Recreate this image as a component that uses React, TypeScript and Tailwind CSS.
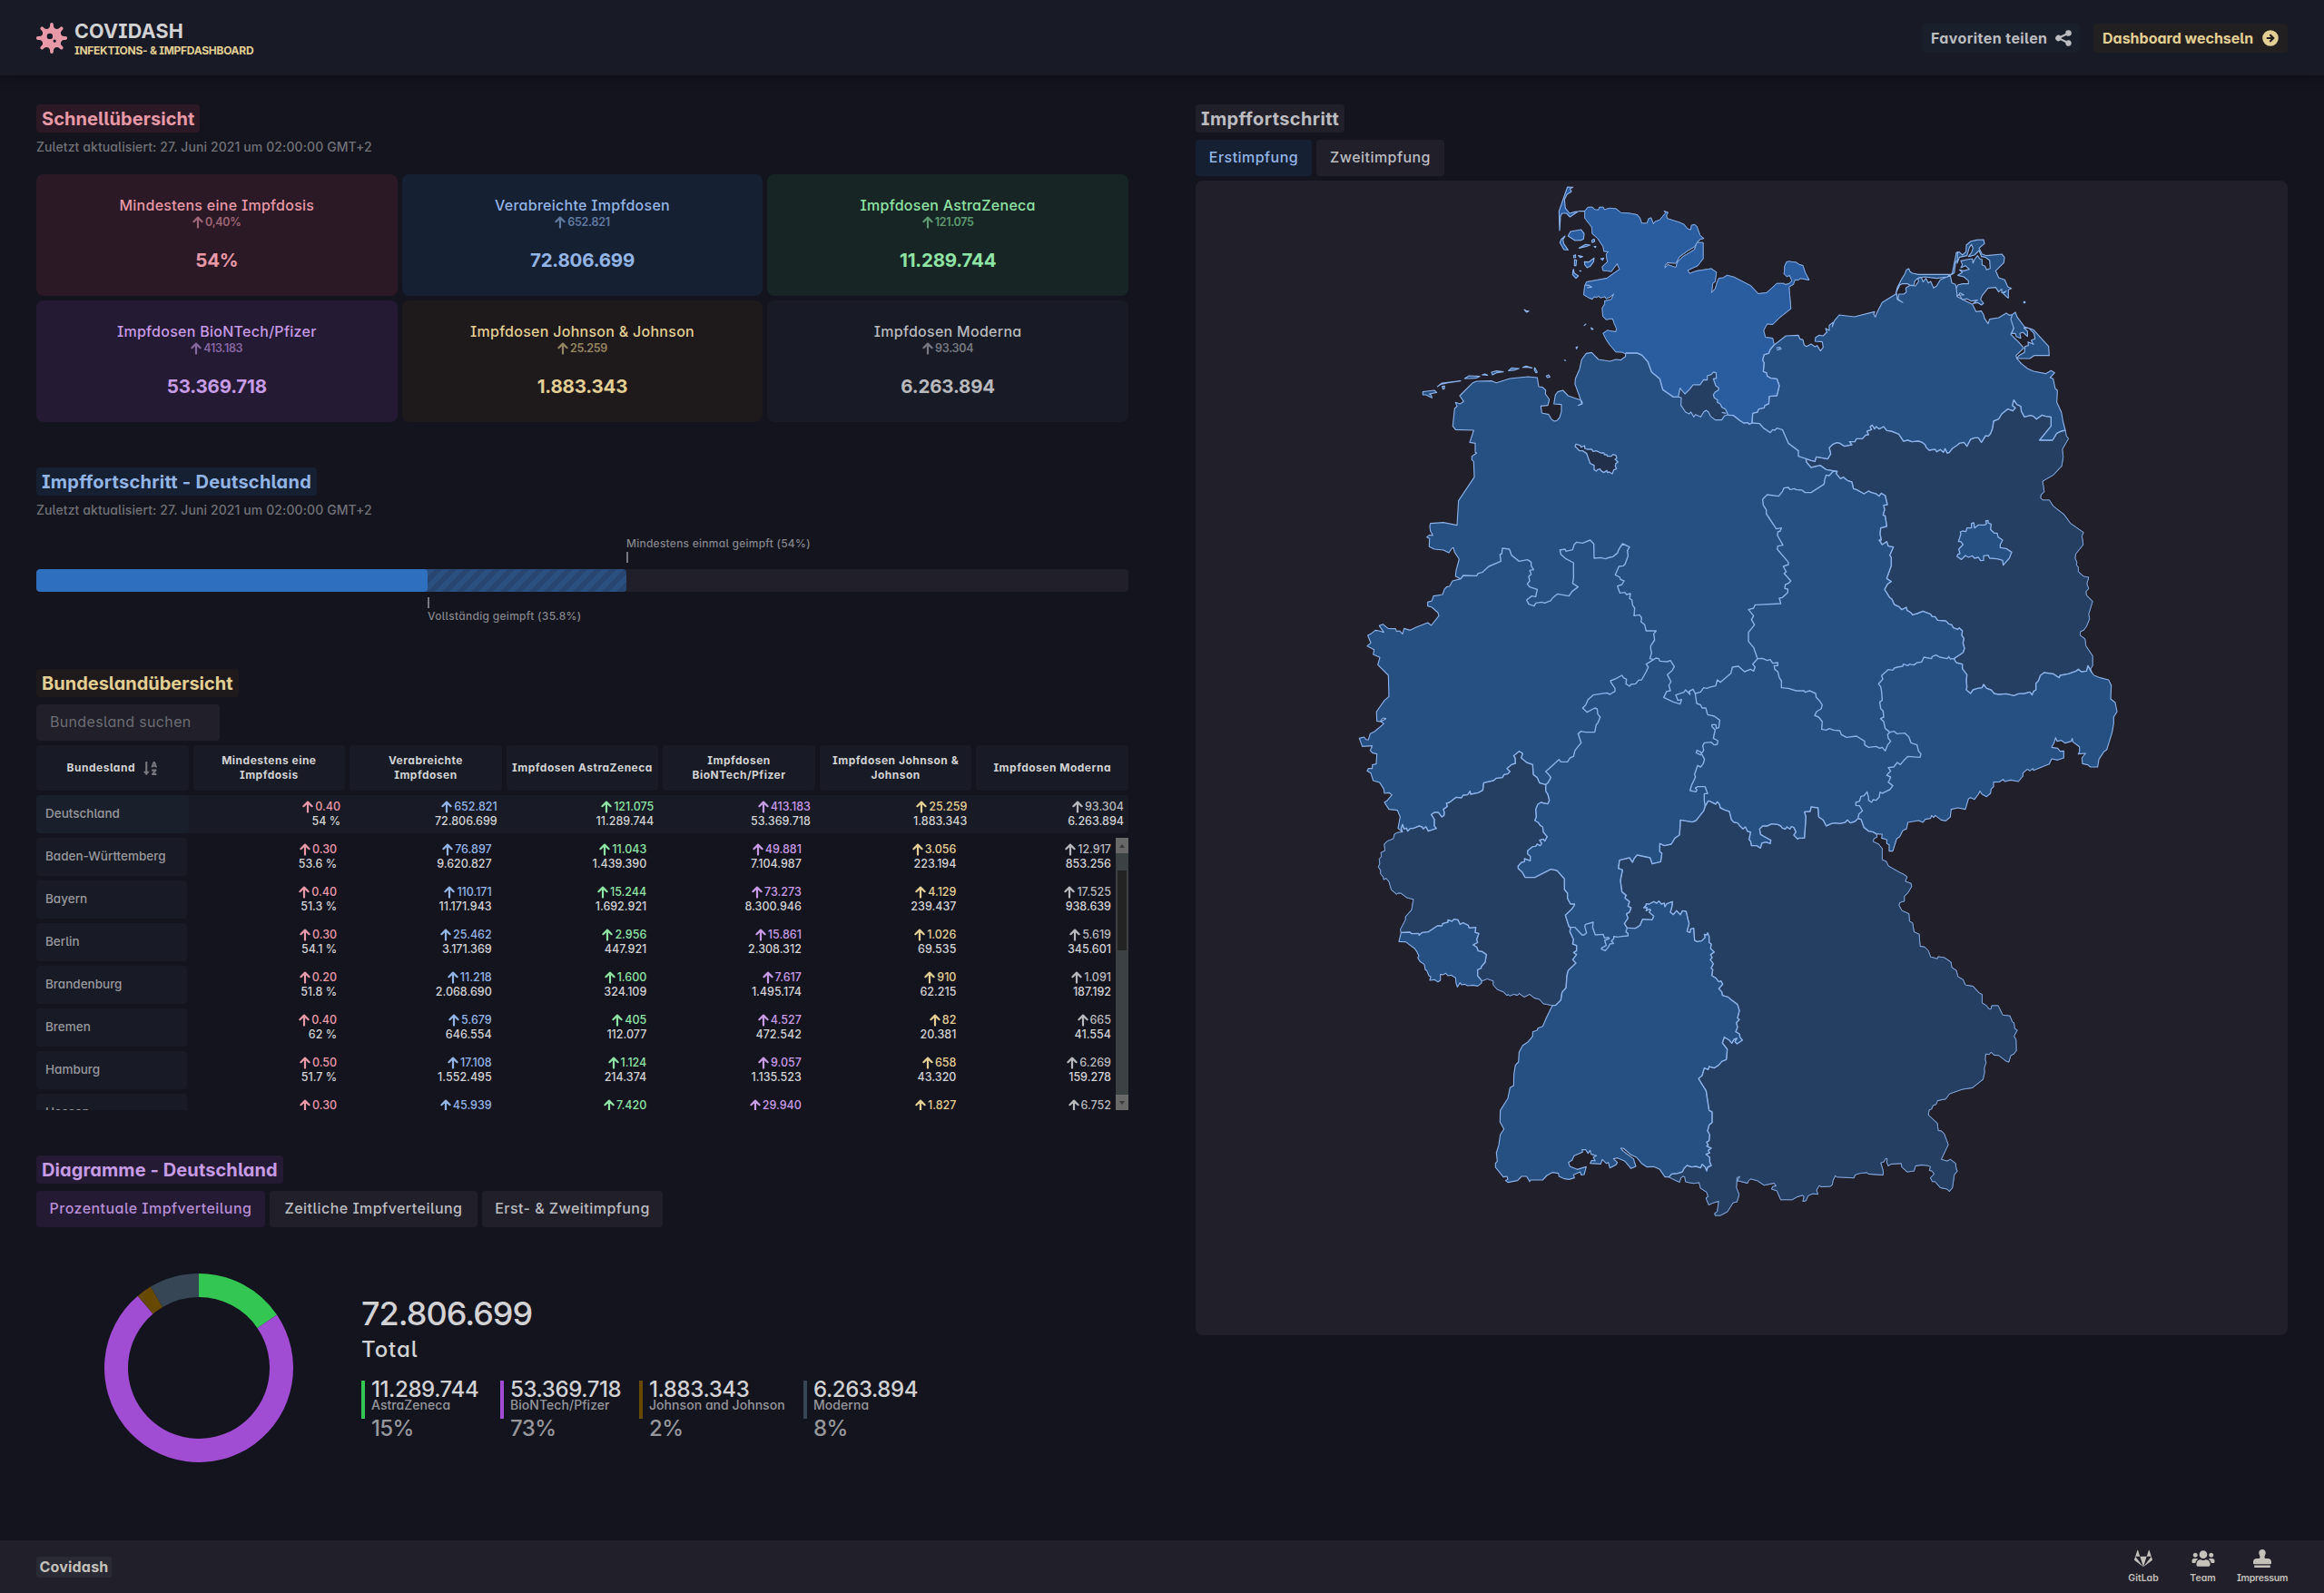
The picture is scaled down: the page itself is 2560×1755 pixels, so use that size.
import React from "react";
import { FaGitlab, FaStamp, FaUsers, FaSortAlphaDown, FaVirus } from "react-icons/fa";
import { HiArrowCircleRight, HiShare } from "react-icons/hi";

/* ---------- map geometry ---------- */

// Offsets of the six survey sheets the coordinates are recorded on.
const SHEETS: Record<string, [number, number]> = {
  A: [0, 0],
  B: [1260, 0],
  C: [0, 1200],
  D: [1260, 1200],
  E: [0, 2340],
  F: [1260, 2340],
};

type Pt = [number, number];

function arc(src: string): Pt[] {
  let off: [number, number] = [0, 0];
  const out: Pt[] = [];
  for (const tok of src.trim().split(/\s+/)) {
    if (SHEETS[tok]) {
      off = SHEETS[tok];
      continue;
    }
    const [x, y] = tok.split(",").map(Number);
    out.push([x + off[0], y + off[1]]);
  }
  return out;
}

const rev = (a: Pt[]): Pt[] => [...a].reverse();
const line = (a: Pt[]) => "M" + a.map((p) => p.join(",")).join("L");
const ring = (...arcs: Pt[][]) => line(arcs.flat()) + "Z";

const shCoast = arc(`A 932,630 922,624 900,623 880,600 868,582 858,562 872,552 900,557 902,545 895,530 889,513 868,516 857,505 855,478 863,465 863,455 885,450 893,431 880,442 868,447 864,440 850,444 842,439 835,443 828,440 822,448 812,445 806,441 794,434 797,405 803,392 870,380 912,350 904,331 885,357 857,354 855,342 872,326 868,300 875,292 860,290 858,275 840,248 822,232 820,210 803,188 797,180 797,158 808,145 822,145 830,153 842,154 846,145 858,145 862,153 880,148 900,150 916,163 945,165 970,170 980,182 985,198 1003,198 1008,183 1016,180 1024,200 1030,192 1045,187 1066,162 1060,158 1072,162 1067,172 1069,182 1110,195 1125,202 1135,215 1147,220 1150,205 1160,202 1168,210 1178,238 1190,248 1180,250 1170,258 1160,275 1135,290 1110,308 1098,330 1070,328 1062,338 1062,346 1072,335 1098,344 1104,325 1122,308 1160,285 1168,262 1188,262 1188,315 1170,338 1137,353 1143,364 1165,356 1215,348 1232,360 1228,390 1220,396 1216,428 1228,415 1234,395 1240,380 1255,378 1268,370 1290,376 1345,404 1370,431 1398,428 1432,397 1456,397 B 198,401 212,398 222,388 214,370 205,374 196,365 198,340 204,326 212,324 235,327 247,335 258,338 265,360 278,385 250,380 240,386 232,384 226,400 212,408 218,480 180,510 158,532 140,530 128,552 134,575 158,578 163,600`);
const shMv = arc(`B 163,600 150,615 145,628 130,632 125,650 130,660 127,688 138,692 140,703 152,710 172,712 180,735 172,768 147,770 145,795 132,800 130,808 112,812 108,822 92,826 90,858`);
const shNiEast = arc(`B 90,858 80,862 76,857 62,858 50,850 28,833 10,832`);
const hhNorth = arc(`A 1270,830 1262,812 1250,806 1245,795 1235,790 1236,782 1225,775 1222,765 1228,755 1238,750 1240,742 1230,735 1222,712 1232,710 1231,692 1222,690 1215,698 1202,702 1202,716 1190,715 1178,732 1155,732 1145,745 1128,762 1118,750 1112,743 1106,772`);
const shNiWest = arc(`A 1106,772 1090,772 1055,748 1045,712 1018,690 1005,655 985,633 970,627 932,627`);
const hhSouth = arc(`A 1106,772 1116,774 1115,800 1130,822 1142,828 1148,822 1157,838 1163,830 1180,838 1190,822 1198,816 1206,822 1212,835 1228,848 1250,848 1258,835 1270,830`);

const mvCoast = arc(`B 163,600 202,570 243,568 248,580 258,583 262,600 270,605 285,597 298,606 305,602 316,620 325,608 322,590 298,588 300,575 312,568 325,570 337,558 333,545 345,552 345,535 358,525 355,540 362,520 378,501 428,507 495,490 492,498 497,508 503,493 520,460 560,435 568,430 570,450 588,460 572,448 575,432 592,432 600,425 598,412 612,403 630,405 640,390 638,378 650,378 655,392 665,380 672,395 680,390 690,412 700,405 712,385 745,370 750,395 762,400 768,420 768,440 790,452 818,466 830,490 848,488 855,500 858,512 870,530 875,515 905,510 930,495 940,502 950,500 955,545 945,565 970,590 988,610 962,635 965,645 980,662 1000,678 1020,687 1060,695 1078,685 1090,692 1075,708 1085,712 1092,745 1099,750 1097,790 1112,822 1118,855 1125,882`);
const bbEast = arc(`B 1125,882 1128,900 1135,910 1115,945 1118,970 1113,1000 1085,1030 1050,1050 1055,1085 1045,1095 1043,1106 1050,1113 1072,1113 1085,1133 1120,1160 1142,1190 1185,1220 D 1180,30 1184,60 1160,90 1157,105 1163,118 1162,128 1168,135 1168,150 1185,165 1202,168 1196,190 1202,205 1193,215 1195,228 1215,248 1202,290 1205,305 1195,330 1185,343 1175,347 1174,360 1190,372 1193,395 1215,428 1215,460 1208,472 1212,482`);
const snCoast = arc(`D 1212,482 1220,492 1240,500 1268,507 1277,525 1275,570 1290,582 1296,612 1285,630 1285,650 1280,680 1270,712 1262,738 1252,745 1236,770 1232,795 1208,795 1200,788 1182,784 1180,765 1192,750 1168,752 1172,745 1172,728 1150,712 1148,700 1145,710 1125,716 1112,707 1098,710 1093,698 1088,715 1080,730 1100,733 1108,743 1120,742 1120,765 1100,772 1080,768 1072,785 1040,798 1020,806 1018,800 1008,808 1000,802 985,815 985,825 970,843 945,838 925,843 920,836 908,844 888,845 888,860 880,868 878,882 865,893 850,885 843,875 838,885 825,902 812,896 805,900 795,935 770,930 748,935 745,960 730,973 715,970 695,955 690,962 683,955 680,965 662,968 655,978 640,972 605,978 600,1000 588,1005 578,1025 568,1032 555,1073 543,1073 543,1052 535,1048 535,1035 518,1030 520,1017 500,1016`);
const byEast = arc(`D 500,1016 503,1026 492,1032 490,1042 508,1050 520,1065 520,1102 533,1107 540,1122 580,1145 F 588,8 602,18 596,33 615,40 617,50 605,70 593,82 593,98 578,103 575,112 585,130 608,140 610,165 620,170 625,200 642,208 645,248 660,250 672,262 680,283 703,289 705,282 725,285 747,300 750,318 765,328 770,348 787,358 795,376 820,380 840,402 850,407 850,435 863,443 873,455 880,455 882,444 903,444 918,475 942,478 950,498 955,500 958,520 966,525 955,545 962,555 963,592 955,603 945,608 938,630 930,627 905,608 890,607 880,597 873,605 862,603 860,620 863,632 857,650 858,665 853,687 818,715 785,720 742,735 730,752 703,757 698,770 688,773 683,785 675,788 672,805 702,833 705,857 715,858 725,868 738,903 715,952 735,958 745,952 762,965 765,985 768,990 758,1003 752,1045 742,1057 735,1050 712,1045 695,1025 686,1025 680,1013 692,1000 685,990 676,988 680,976 670,972 650,970 630,973 625,990 603,993 585,977 583,965 550,967 540,973 535,960 537,950 532,948 525,960 515,963 523,990 523,1003 475,1000 470,995 445,998 430,1003 427,1013 370,1010 365,1005 357,1022 355,1035 348,1041 318,1042 312,1038 303,1053 307,1067 290,1065 275,1072 268,1088 258,1090 262,1075 258,1070 240,1075 222,1085 185,1085 172,1055 155,1050 158,1042 170,1040 163,1030 130,1037 108,1022 85,1016 78,1022 75,1030 42,1022 50,1008 40,1012 38,1045 47,1068 40,1092 27,1095 8,1125 E 1245,1137 1228,1137 1227,1130 1235,1125 1240,1090 1222,1095 1207,1102 1198,1080 1205,1075 1200,1060 1180,1047 1175,1028 1158,1031 1140,1028 1130,1025 1128,1010 1122,1007 1115,1012 1110,1027 1095,1020 1075,1010`);
const bwSouth = arc(`E 1075,1010 1062,1010 1045,985 1025,976 1003,977 985,965 968,945 950,937 925,915 916,915 925,925 958,950 966,975 950,982 930,958 905,947 892,950 905,962 900,970 880,980 875,962 868,965 855,952 850,967 815,965 820,955 832,957 825,945 836,940 818,935 815,922 808,932 800,920 788,920 790,928 762,940 755,955 743,962 748,975 772,985 802,976 795,1002 785,1003 782,993 760,1003 763,1013 745,1018 730,1016 712,1008 710,998 690,995 672,1005 658,1020 618,1020 615,1025 605,1008 588,1008 575,1022 543,1028 535,1022 543,1018 540,1008 528,1010 502,978 502,965 508,958 505,930 513,905 518,870 530,852 517,828 518,790 543,750 550,715 562,708 563,670 568,640 578,630 580,598 592,575 608,565 625,545 625,530 640,525 642,518 658,512 672,480 690,443`);
const rpSouth = arc(`E 690,443 660,437 648,423 630,418 615,406 597,415 580,403 575,409 563,406 550,411 543,406 540,410 530,399 508,390 495,375 495,362 475,355 457,362`);
const slSouth = arc(`E 457,362 455,370 443,379 428,376 410,378 400,373 390,375 385,368 376,382 372,370 370,352 355,343 345,345 338,337 328,342 320,340 320,360 312,365 300,358 285,360 288,348 282,345 275,328 270,325 267,308 252,297 245,285 249,280 242,265 235,255 205,233 183,232 190,202`);
const rpWest = arc(`E 190,202 188,192 205,160 205,150 225,128 231,92 210,87 190,72 182,71 175,75 158,60 150,33 140,22 133,27 131,18 123,8 C 122,1135 115,1125 120,1115 118,1100 125,1092 124,1078 137,1072 135,1050 145,1040 165,1032 168,1018 178,1012 195,1010`);
const nwWest = arc(`C 195,1010 180,998 187,960 178,938 150,935 135,912 145,905 160,887 150,880 135,882 133,868 120,847 98,840 90,815 78,808 82,800 95,800 95,788 108,785 110,752 95,748 88,740 95,725 62,727 52,700 68,696 75,705 82,705 88,685 102,678 133,652 123,645 140,635 130,633 120,645 110,643 109,612 135,575 150,562 148,492 113,457 120,433 98,423 101,407 78,395 90,385 80,360 90,355 105,343 118,345 133,350 118,328 130,323 147,337 172,338 175,347 185,345 195,355 200,337 220,343 240,333 278,318 290,327 315,295 312,285 292,267 278,263 278,250 292,246 297,230 327,225 333,208 340,200 350,198 360,180 388,173`);
const niWest = arc(`C 388,173 370,165 372,145 382,108 367,85 363,70 358,72 348,87 330,78 300,75 283,67 284,40 275,35 284,28 295,30 287,15 285,0 A 287,1190 330,1187 375,1196 380,1115 432,1037 430,985 424,980 424,968 440,957 435,955 435,925 417,922 430,882 370,880 361,868 367,810 375,803 370,790 385,795 397,787 384,768 427,725 440,720 490,719 505,725 550,711 610,705 640,708 645,738 658,740 668,750 667,762 680,780 675,800 652,802 655,825 678,830 688,847 697,852 705,850 714,840 720,820 720,797 695,795 700,765 708,755 725,750 742,768 785,783 790,792 775,800 788,796 778,765 765,730 766,712 780,680 787,648 802,628 820,625 842,648 880,654 900,648 915,650 932,638 932,627`);

const niMv = arc(`B 90,858 115,860 128,875 150,890 158,880 165,882 172,875 190,880 210,925 243,950 243,968 268,976`);
const mvBb = arc(`B 268,976 285,982 298,985 302,970 340,977 350,960 345,940 358,928 370,923 380,925 395,935 420,930 412,920 430,920 435,910 455,910 465,898 475,897 470,885 485,880 480,870 487,865 495,878 500,870 510,878 525,870 535,883 550,885 575,895 590,918 605,915 618,920 640,918 652,922 662,930 665,938 675,948 695,945 700,953 712,946 722,955 728,943 735,958 742,955 752,942 770,930 775,925 790,922 800,935 812,912 825,907 838,907 848,922 862,900 870,902 878,893 885,875 888,852 905,845 915,828 935,812 952,818 960,808 950,800 955,782 965,797 978,803 980,820 990,838 1010,833 1020,836 1030,845 1048,832 1060,836 1078,838 1078,868 1040,915 1083,915 1097,892 1112,885 1125,882`);
const niBb = arc(`B 268,976 270,988 285,1005 315,998 335,1012 372,1018`);
const niSt = arc(`B 372,1018 358,1018 345,1032 335,1030 330,1045 328,1060 285,1088 265,1088 255,1080 235,1078 230,1075 215,1078 210,1071 195,1073 190,1085 178,1100 140,1095 125,1110 127,1130 137,1145 137,1158 170,1208 187,1205 183,1215 175,1218 174,1230 D 192,62 175,65 173,75 210,118 210,126 193,132 203,150 196,155 218,180 210,188 200,192 198,205 208,207 208,218 190,235 180,237 185,255 100,259 95,270 78,275 95,295 88,308 98,325 78,350 78,380 95,400 108,437`);
const bbSt = arc(`B 372,1018 368,1025 382,1042 392,1037 405,1048 420,1053 425,1075 435,1078 460,1092 475,1083 485,1088 500,1092 510,1100 517,1090 530,1098 537,1128 525,1130 528,1145 523,1162 530,1165 535,1200 515,1205 513,1225 517,1245 D 510,45 520,60 535,50 540,65 557,68 545,95 550,102 550,130 535,172 550,182 538,190 528,208 545,235 552,240 560,258 575,265 585,275 600,267 602,277 615,285 620,292 635,288 655,280 680,290 685,298 695,298 703,310 730,312 740,322 750,325 755,335 770,340 775,335 785,345 783,360 790,370 787,385 792,403 787,417 757,437`);
const bbSn = arc(`D 757,437 765,450 785,455 785,470 800,490 798,510 800,530 798,540 812,552 820,540 835,535 850,533 855,522 865,535 880,540 890,552 905,555 930,553 955,559 970,553 990,552 1008,547 1015,557 1020,545 1028,540 1028,518 1036,510 1043,492 1055,483 1085,487 1105,500 1108,492 1135,487 1160,478 1168,472 1178,480 1195,478 1200,460 1212,482`);
const stSn = arc(`D 757,437 745,438 740,430 735,437 710,432 698,425 685,430 683,437 658,432 650,448 635,450 625,458 610,455 605,460 590,455 588,462 570,465 560,468 555,475 540,473 518,493 522,505 508,520 515,530 518,545 520,575 512,580 515,602 523,610 525,630 515,635 525,645 530,668 545,680`);
const stTh = arc(`D 108,437 125,436 140,443 150,440 158,452 175,450 175,460 163,460 165,472 175,480 180,500 187,510 187,533 210,535 235,543 262,543 265,548 280,543 300,552 302,565 312,575 322,590 318,603 303,612 297,625 310,630 322,645 320,670 335,673 345,668 360,673 380,675 385,688 402,697 435,693 462,710 462,722 475,730 500,727 512,733 520,730 530,742 538,722 548,710 540,700 538,688 545,680`);
const thSn = arc(`D 545,680 560,677 568,685 595,683 608,695 615,715 635,722 640,742 648,752 645,763 605,760 590,775 580,787 570,780 558,795 540,797 548,808 535,822 548,828 543,840 540,845 555,857 545,870 528,878 520,882 513,878 510,895 500,905 490,903 485,912 475,905 475,895 470,877 460,890 450,892 445,908 433,912 433,922 445,923 455,940 443,950 440,965`);
const snBy = arc(`D 440,965 450,968 460,995 475,1007 490,1010 500,1016`);
const thBy = arc(`D 440,965 430,975 415,980 405,970 398,978 380,982 365,980 352,982 335,990 325,970 310,960 308,930 285,927 282,942 263,943 268,960 263,1030 245,1030 240,1033 228,1020 235,1010 228,995 220,992 215,1000 205,993 200,1000 190,997 185,990 175,985 155,983 140,990 125,990 115,1000 118,1018 130,1025 152,1037 150,1048 135,1043 122,1047 118,1063 105,1055 88,1055 85,1040 80,1035 85,1010 75,1008 68,993 60,1000 50,990 42,980 30,978 22,970 15,942 0,937 C 1245,930 1242,918 1235,910 1230,918 1210,908 1205,907 1195,925`);
const heBy = arc(`C 1195,925 1190,940 1178,955 1165,972 1152,977 1113,970 1112,995 1110,1020 1095,1030 1083,1050 1060,1055 1045,1048 1045,1075 1052,1080 1048,1108 1020,1115 1013,1095 970,1086 960,1098 955,1110 945,1095 912,1103 908,1130 922,1135 915,1170 920,1208 935,1220 E 933,78 930,88 945,100 940,115 950,120 945,135 935,140 940,155 928,172 937,187`);
const byBw = arc(`E 937,187 965,188 980,178 988,158 1020,160 1025,148 1010,135 1015,127 1010,125 1000,130 1003,120 992,120 1000,112 1000,107 1010,108 1025,100 1035,105 1042,98 1050,108 1060,105 1062,117 1068,107 1087,100 1085,118 1080,135 1090,143 1100,130 1113,143 1120,130 1132,132 1138,158 1142,172 1135,198 1145,202 1147,190 1157,188 1160,228 1168,232 1183,230 1195,218 1192,208 1200,210 1203,203 1208,215 1208,235 1215,240 1213,255 1225,267 1213,275 1218,285 1212,292 1222,305 1215,320 1220,325 1217,345 1230,352 1240,365 1247,362 1253,373 1240,388 1250,398 1252,410 1270,415 1282,425 1302,440 1308,460 1302,485 1308,490 1298,500 1302,515 1296,530 1308,537 1310,548 1318,558 1300,570 1293,562 1300,552 1290,555 1283,568 1275,558 1258,548 1252,567 1268,588 1265,622 1250,628 1240,640 1225,650 1208,645 1205,655 1192,650 1185,675 1173,685 1198,725 1208,790 1218,795 1218,830 1208,838 1203,858 1210,870 1208,890 1200,895 1205,905 1200,908 1215,915 1205,922 1210,930 1198,935 1210,945 1210,960 1215,972 1203,978 1200,990 1195,977 1185,968 1180,980 1165,975 1150,977 1135,972 1125,982 1120,993 1105,998 1085,1000 1075,1010`);
const heBw = arc(`E 937,187 933,200 940,205 940,213 920,215 905,217 893,215 893,222 885,230 892,238 880,240 875,250 865,262 852,257 853,253 868,245 863,228 878,222 875,218 862,220 858,208 832,210 823,185 825,168 800,175 797,182 803,203 795,210 788,210 765,185 750,185`);
const rpBw = arc(`E 750,185 748,200 760,225 757,240 770,245 770,262 760,268 770,275 757,292 768,303 742,328 738,345 735,385 722,400 718,425 700,443 690,443`);
const rpHe = arc(`E 750,185 745,183 733,145 752,127 763,112 763,108 750,108 740,90 740,72 730,60 730,25 708,0 C 705,1137 685,1133 632,1160 600,1160 590,1142 577,1130 577,1122 588,1110 598,1108 598,1098 617,1105 617,1090 608,1082 608,1072 625,1058 635,1057 640,1050 650,1055 655,1048 648,1037 660,1033 665,1040 673,1025 660,1010 658,993 650,988 643,978 632,972 637,960 635,935 642,918 652,912 665,915 675,917 680,905 675,885 668,875 668,853`);
const nwRp = arc(`C 195,1010 190,998 195,985 200,1000 208,997 212,1007 220,998 230,998 250,990 260,993 263,1000 272,992 280,1007 307,998 300,990 300,968 290,952 300,945 313,945 325,960 332,955 333,945 330,935 343,925 340,915 350,912 372,895 390,897 395,888 410,887 418,875 420,885 445,880 460,872 463,847 495,840 505,832 525,830 530,820 542,818 550,810 540,800 555,787 568,783 567,765 562,758 580,743 592,750 587,765 605,780 625,787 627,820 640,830 648,848 668,853`);
const nwHe = arc(`C 668,853 675,848 685,830 678,820 668,810 685,795 712,770 718,778 740,778 748,765 760,760 765,740 785,715 780,700 775,685 785,677 800,680 830,680 835,655 840,650 848,630 840,620 838,603 830,600 805,614 790,600 800,590 808,572 825,557 870,550 880,555 897,545 897,535 885,518 882,510 900,503 920,492 925,500 935,505 933,520 945,528 950,522 965,520 975,508 985,507 1000,480 1007,465 1000,455 1025,440`);
const nwNi = arc(`C 388,173 395,162 440,163 445,155 458,152 480,132 520,115 517,93 523,90 525,72 548,75 555,95 580,115 608,110 620,118 620,130 628,143 615,145 620,158 612,165 615,180 607,190 615,200 640,208 635,232 622,230 605,243 612,257 630,263 635,253 655,250 665,253 685,245 690,237 707,223 745,230 755,215 775,200 757,188 760,170 760,120 735,107 718,92 715,78 732,75 735,82 757,77 762,60 770,52 790,55 815,45 827,58 828,105 850,103 865,107 880,102 890,100 905,88 910,75 922,57 945,68 938,80 940,98 930,125 925,130 910,132 898,160 913,168 915,175 927,180 920,192 905,197 913,220 930,218 935,225 948,222 945,238 953,243 955,260 962,270 960,295 978,292 985,302 983,315 995,325 1000,345 1033,345 1025,355 1028,375 1015,395 1015,405 1018,418 1012,437 1025,440`);
const niHe = arc(`C 1025,440 1032,435 1042,437 1045,445 1070,447 1080,443 1093,463 1085,477 1070,490 1082,513 1075,525 1080,543 1068,545 1058,565 1090,580 1112,587 1117,572 1105,575 1098,557 1125,548 1130,540 1138,548 1145,555 1142,545 1155,538 1162,552`);
const niTh = arc(`C 1162,552 1180,547 1190,533 1200,535 1215,530 1230,527 1235,507 1245,515 1280,485 1285,465 1305,462 1325,480 1345,472 1355,478 1360,465 1352,455 1368,437`);
const heTh = arc(`C 1162,552 1167,585 1180,590 1185,600 1197,600 1203,622 1225,627 1243,640 1240,665 1232,668 1230,655 1217,655 1218,662 1228,672 1222,700 1237,708 1235,720 1225,722 1215,713 1192,715 1187,725 1190,740 1180,755 1165,748 1168,740 1180,745 1193,770 1188,785 1180,795 1170,790 1160,820 1163,828 1155,845 1150,855 1145,873 1165,877 1168,870 1162,865 1170,860 1195,860 1203,883 1192,883 1192,905 1195,925`);
const slRp = arc(`E 190,202 220,201 225,206 248,205 250,211 260,202 280,200 310,180 325,180 328,172 345,168 345,160 358,165 365,158 378,160 385,175 395,170 412,178 415,187 437,185 435,202 447,205 440,225 443,235 428,243 440,250 445,263 458,265 472,275 468,300 455,315 455,320 443,325 443,345 457,362`);
const berlin = arc(`B 780,1225 778,1218 785,1215 797,1217 800,1205 815,1205 815,1190 823,1188 825,1205 838,1195 860,1195 865,1190 862,1182 870,1180 870,1188 880,1192 878,1210 890,1222 900,1222 903,1235 918,1245 910,1260 D 910,70 930,73 948,85 940,105 920,128 918,112 900,107 875,105 870,95 855,97 855,112 845,113 838,102 825,105 818,97 805,102 795,96 782,109 767,99 770,92 777,90 773,75 787,60 780,50 772,50`);
const bremen = arc(`A 765,935 768,928 782,932 785,938 797,933 797,942 805,945 820,945 825,952 835,950 850,957 860,957 862,963 870,963 872,968 885,968 890,962 900,965 903,975 897,978 907,987 900,992 898,1000 902,1010 893,1013 888,1026 878,1020 872,1022 870,1015 860,1022 850,1015 848,1010 840,1012 835,1017 828,1012 828,998 815,992 803,958 790,950 780,950`);

const darss = arc(`B 565,430 570,410 583,385 595,365 600,352 608,348 612,358 620,363 640,367 745,367 735,375 700,380 660,375 640,378 628,388 625,402 612,403 605,398 585,398 578,402`);
const ruegen = arc(`B 768,440 765,412 770,402 785,398 805,398 805,388 790,375 770,370 785,360 775,352 790,355 808,350 795,338 780,345 785,335 780,322 800,318 818,315 820,330 825,318 835,305 842,315 850,318 850,335 860,340 865,352 877,347 875,320 860,310 848,308 840,288 825,303 805,308 815,295 820,280 815,268 808,278 800,305 775,310 768,330 765,295 775,293 785,303 797,292 798,270 812,258 832,253 855,252 858,265 840,280 850,300 865,305 915,300 924,310 922,328 895,355 905,378 925,385 935,408 947,413 937,418 937,445 930,440 920,430 930,422 915,428 915,415 905,425 895,410 870,412 850,437 845,450 855,462 848,468 835,460 820,463 835,452 815,455 800,448 785,450 775,435 790,435 778,428`);
const hiddensee = arc(`B 770,293 765,297 757,335 752,362 745,370 758,362 763,325 768,320`);
const usedom = arc(`B 950,500 960,492 966,508 990,540 1020,550 1070,605 1072,635 1022,635 1008,645 965,645 972,635 990,625 992,605 1003,602 1002,590 1020,598 1012,585 1025,580 1022,562 1005,545 988,543 1000,555 1000,572 985,558 975,562 978,578 963,572 960,562 948,562 955,545 945,515`);

const ISLES_SH = [
  `A 740,78 758,79 748,84 753,93 738,103 730,120 733,148 747,165 765,160 775,159 748,177 737,165 722,165 717,175 714,222 712,158 720,135`,
  `A 778,158 797,158`,
  `A 742,240 750,225 785,219 795,232 793,250 785,254 765,255`,
  `A 732,240 720,250 715,262 728,285 742,286 728,266 725,253`,
  `A 778,280 800,268 815,270 800,275`,
  `A 820,255 828,250 830,258 822,262`,
  `A 796,325 810,326 828,313 826,325 815,340 805,345 797,335`,
  `A 760,350 762,362 776,372 768,380 757,368 758,355`,
  `A 763,318 770,320 768,338 763,338`,
  `A 760,305 766,302 767,311 761,312`,
  `A 776,305 790,308 782,311`,
  `A 828,275 834,274 832,278`,
  `A 850,315 860,313 856,320`,
  `A 780,355 785,356`,
  `A 597,483 605,488 612,488 605,492 601,488`,
  `A 795,536 801,531`,
  `A 818,543 825,548 820,549`,
  `A 768,608 773,606 770,613`,
  `A 730,650 734,652`,
].map(arc);
const ISLES_NI = [
  `A 262,755 262,765 272,765 292,775 290,766 283,762 308,757 300,750 275,753`,
  `A 387,719 325,726 310,738 322,730 345,725`,
  `A 326,737 334,736 333,745 328,746`,
  `A 400,711 415,702 450,704 440,709 418,711`,
  `A 458,699 467,696 476,700`,
  `A 489,690 492,699 505,692 528,689 505,686`,
  `A 545,685 555,676 580,678 565,683`,
  `A 592,674 603,670 623,676 610,674`,
  `A 632,675 640,690 636,692 630,682`,
  `A 670,703 678,699 682,706 673,708`,
].map(arc);

const SHAPES = {
  country: ring(shCoast, mvCoast, bbEast, snCoast, byEast, bwSouth, rpSouth, slSouth, rpWest, nwWest, niWest),
  sh: ring(shCoast, shMv, shNiEast, hhNorth, shNiWest),
  hh: ring(hhNorth, hhSouth),
  bb: ring(mvBb, bbEast, rev(bbSn), rev(bbSt), rev(niBb)),
  by: ring(rev(snBy), thBy, heBy, byBw, rev(byEast)),
  rp: ring(rpWest, nwRp, rev(rpHe), rpBw, rpSouth, rev(slRp)),
};

const BORDERS = [niMv, niSt, stSn, stTh, thSn, heBw, nwHe, nwNi, niHe, niTh, heTh, shMv, shNiEast, shNiWest, snBy, thBy, heBy, byBw, rpBw, rpHe, nwRp, slRp, mvBb, niBb, bbSt, bbSn];

function GermanyMap() {
  return (
    <svg className="ml-[163px] mt-[-19px] block h-[1272px] w-[1000px]" viewBox="0 0 3000 3816" stroke="#8cb2ea" strokeWidth="3.4" strokeLinejoin="round">
      <path d={SHAPES.country} fill="#264f82" />
      {[darss, ruegen, hiddensee, usedom, ...ISLES_NI].map((a, i) => (
        <path key={i} d={ring(a)} fill="#264f82" />
      ))}
      <path d="M2248,457h4v4h-4z" fill="#264f82" />
      <path d={SHAPES.sh} fill="#2a5d9f" strokeWidth="2" />
      {ISLES_SH.map((a, i) => (
        <path key={i} d={ring(a)} fill="#2a5d9f" />
      ))}
      <path d={SHAPES.hh} fill="#253f63" />
      <path d={SHAPES.bb} fill="#253f63" strokeWidth="2" />
      <path d={SHAPES.by} fill="#253f63" strokeWidth="2" />
      <path d={SHAPES.rp} fill="#253f63" strokeWidth="2" />
      <path d={ring(bremen)} fill="#222f4b" strokeWidth="4" />
      <path d={ring(berlin)} fill="#264f82" strokeWidth="4" />
      {BORDERS.map((a, i) => (
        <path key={i} d={line(a)} fill="none" strokeWidth="4.2" />
      ))}
      <path d="M1430,610l12,-2l4,5l-14,4M798,402l12,1l10,6l-16,2M1250,823l14,3" fill="none" />
    </svg>
  );
}

/* ---------- small pieces ---------- */

function Up({ className = "" }: { className?: string }) {
  return (
    <svg viewBox="0 0 12 14" className={"mr-[2px] h-[14px] w-[12px] shrink-0 " + className} fill="none" stroke="currentColor" strokeWidth="2.2" strokeLinecap="round" strokeLinejoin="round">
      <path d="M6 12.6V2M1.4 6.2 6 1.6 10.6 6.2" />
    </svg>
  );
}

function Heading({ children, className }: { children: React.ReactNode; className: string }) {
  return (
    <h2 className={"flex h-[31px] w-fit items-center rounded-[4px] px-[6px] pt-px text-[20px] font-bold leading-none " + className}>
      {children}
    </h2>
  );
}

function Updated() {
  return <p className="mt-[6px] h-[20px] text-[14px] font-medium leading-[20px] tracking-[0.1px] text-[#717177]">Zuletzt aktualisiert: 27. Juni 2021 um 02:00:00 GMT+2</p>;
}

function Tab({ children, className }: { children: React.ReactNode; className: string }) {
  return <button className={"flex h-[40px] items-center justify-center rounded-[4px] pb-[2px] text-[16px] font-medium leading-none tracking-[0.46px] " + className}>{children}</button>;
}

const CARDS = [
  ["Mindestens eine Impfdosis", "0,40%", "54%", "bg-[#2b1926] text-[#e899a8]"],
  ["Verabreichte Impfdosen", "652.821", "72.806.699", "bg-[#162033] text-[#93b5e6]"],
  ["Impfdosen AstraZeneca", "121.075", "11.289.744", "bg-[#172624] text-[#8fe3a4]"],
  ["Impfdosen BioNTech/Pfizer", "413.183", "53.369.718", "bg-[#251a33] text-[#c79be6]"],
  ["Impfdosen Johnson & Johnson", "25.259", "1.883.343", "bg-[#1e191b] text-[#e3cf94]"],
  ["Impfdosen Moderna", "93.304", "6.263.894", "bg-[#181a26] text-[#b9b9bd]"],
];

const COLS = ["text-[#e899a8]", "text-[#93b5e6]", "text-[#8fe3a4]", "text-[#c79be6]", "text-[#e3cf94]", "text-[#b9b9bd]"];

const TOTAL: [string, string][] = [["0.40", "54 %"], ["652.821", "72.806.699"], ["121.075", "11.289.744"], ["413.183", "53.369.718"], ["25.259", "1.883.343"], ["93.304", "6.263.894"]];

const ROWS: [string, [string, string][]][] = [
  ["Baden-Württemberg", [["0.30", "53.6 %"], ["76.897", "9.620.827"], ["11.043", "1.439.390"], ["49.881", "7.104.987"], ["3.056", "223.194"], ["12.917", "853.256"]]],
  ["Bayern", [["0.40", "51.3 %"], ["110.171", "11.171.943"], ["15.244", "1.692.921"], ["73.273", "8.300.946"], ["4.129", "239.437"], ["17.525", "938.639"]]],
  ["Berlin", [["0.30", "54.1 %"], ["25.462", "3.171.369"], ["2.956", "447.921"], ["15.861", "2.308.312"], ["1.026", "69.535"], ["5.619", "345.601"]]],
  ["Brandenburg", [["0.20", "51.8 %"], ["11.218", "2.068.690"], ["1.600", "324.109"], ["7.617", "1.495.174"], ["910", "62.215"], ["1.091", "187.192"]]],
  ["Bremen", [["0.40", "62 %"], ["5.679", "646.554"], ["405", "112.077"], ["4.527", "472.542"], ["82", "20.381"], ["665", "41.554"]]],
  ["Hamburg", [["0.50", "51.7 %"], ["17.108", "1.552.495"], ["1.124", "214.374"], ["9.057", "1.135.523"], ["658", "43.320"], ["6.269", "159.278"]]],
  ["Hessen", [["0.30", ""], ["45.939", ""], ["7.420", ""], ["29.940", ""], ["1.827", ""], ["6.752", ""]]],
];

function Cells({ cells }: { cells: [string, string][] }) {
  return (
    <>
      {cells.map(([d, v], i) => (
        <div key={i} className="flex flex-col items-end justify-center pr-[5px] text-[12.5px] font-medium leading-[16px]">
          <span className={"flex h-[16px] items-center " + COLS[i]}>
            <Up />
            {d}
          </span>
          <span className="h-[16px] text-[#d2d2d4]">{v}</span>
        </div>
      ))}
    </>
  );
}

const SLICES = [
  { color: "#33c653", from: 0, to: 55.8 },
  { color: "#a04cd3", from: 55.8, to: 319.7 },
  { color: "#684900", from: 319.7, to: 329.3 },
  { color: "#364655", from: 329.3, to: 360 },
];

function slicePath(from: number, to: number) {
  const p = (deg: number, r: number) => {
    const t = (deg * Math.PI) / 180;
    return `${104 + r * Math.sin(t)},${104 - r * Math.cos(t)}`;
  };
  const big = to - from > 180 ? 1 : 0;
  return `M${p(from, 104)}A104,104 0 ${big} 1 ${p(to, 104)}L${p(to, 78)}A78,78 0 ${big} 0 ${p(from, 78)}Z`;
}

const LEGEND = [
  ["11.289.744", "AstraZeneca", "15%", "w-[153px]", "bg-[#33c653]"],
  ["53.369.718", "BioNTech/Pfizer", "73%", "w-[153px]", "bg-[#a04cd3]"],
  ["1.883.343", "Johnson and Johnson", "2%", "w-[181px]", "bg-[#684900]"],
  ["6.263.894", "Moderna", "8%", "w-[140px]", "bg-[#364655]"],
];

/* ---------- page ---------- */

export default function App() {
  return (
    <div className="flex h-[1755px] w-[2560px] flex-col overflow-hidden bg-[#14141f] font-['Inter',sans-serif] whitespace-nowrap text-[#d2d2d4] [font-feature-settings:'cv11','cv05','cv08']">
      <header className="flex h-[83px] shrink-0 items-center justify-between bg-[#181a26] px-[40px] shadow-[0_4px_12px_rgba(10,10,20,0.35)]">
        <div className="flex items-center gap-[8px]">
          <FaVirus className="mt-px h-[34px] w-[34px] text-[#e899a8]" />
          <div>
            <div className="mt-[5px] text-[21.5px] font-bold leading-[22px] tracking-[0.2px]">COVIDASH</div>
            <div className="text-[12px] font-bold leading-[21px] tracking-[-0.28px] text-[#e3cf94]">INFEKTIONS- &amp; IMPFDASHBOARD</div>
          </div>
        </div>
        <div className="flex gap-[15px] text-[16px] font-bold leading-none">
          <div className="flex h-[32px] w-[174px] items-center justify-between rounded-[4px] bg-[#1a202b] pl-[10px] pr-[7px] tracking-[0.42px] text-[#bcbcc0]">
            Favoriten teilen
            <HiShare className="h-[22px] w-[22px]" />
          </div>
          <div className="flex h-[32px] w-[214px] items-center justify-between rounded-[4px] bg-[#221f20] pl-[10px] pr-[8px] text-[#e3cf94]">
            Dashboard wechseln
            <HiArrowCircleRight className="h-[22px] w-[22px]" />
          </div>
        </div>
      </header>

      <main className="flex h-[1614px] shrink-0 gap-[74px] px-[40px] pt-[32px]">
        <div className="w-[1203px]">
          <section className="h-[400px]">
            <Heading className="bg-[#2b1926] tracking-[0.07px] text-[#e899a8]">Schnellübersicht</Heading>
            <Updated />
            <div className="mt-[20px] grid grid-cols-3 gap-[5px]">
              {CARDS.map(([t, d, v, c]) => (
                <div key={t} className={"flex h-[134px] flex-col items-center rounded-[8px] pt-[24px] " + c}>
                  <div className="text-[16px] font-medium leading-[21px] tracking-[0.28px]">{t}</div>
                  <div className="mt-px flex items-center text-[12.5px] font-semibold leading-[14px] tracking-[-0.3px] opacity-60">
                    <Up />
                    {d}
                  </div>
                  <div className="mt-[23px] text-[20.5px] font-bold leading-[24px] tracking-[-0.2px]">{v}</div>
                </div>
              ))}
            </div>
          </section>

          <section className="h-[222px]">
            <Heading className="bg-[#162033] tracking-[0.25px] text-[#93b5e6]">Impffortschritt - Deutschland</Heading>
            <Updated />
            <div className="mt-[19px] pl-[650px] text-[12px] font-medium leading-[16px] tracking-[0.25px] text-[#85858b]">Mindestens einmal geimpft (54%)</div>
            <div className="ml-[650px] mt-px h-[12px] w-[2px] bg-[#77777d]" />
            <div className="mt-[7px] flex h-[25px] overflow-hidden rounded-[4px] bg-[#201f2a]">
              <div className="flex w-[650px] overflow-hidden rounded-[4px] bg-[repeating-linear-gradient(135deg,#2a5082_0px,#2a5082_5.66px,#27456f_5.66px,#27456f_11.31px)]">
                <div className="w-[431px] rounded-[4px] bg-[#2f6fbf]" />
              </div>
            </div>
            <div className="ml-[431px] mt-[6px] h-[12px] w-[2px] bg-[#77777d]" />
            <div className="pl-[431px] text-[12px] font-medium leading-[18px] tracking-[0.3px] text-[#85858b]">Vollständig geimpft (35.8%)</div>
          </section>

          <section className="h-[536px]">
            <Heading className="bg-[#1e191b] text-[#e3cf94]">Bundeslandübersicht</Heading>
            <div className="mt-[8px] flex h-[40px] w-[202px] items-center rounded-[4px] bg-[#201f2a] pb-[2px] pl-[15px] text-[16px] tracking-[0.33px] text-[#6d6d74]">Bundesland suchen</div>
            <div className="mt-[5px] grid h-[50px] grid-cols-7 gap-[5px] text-center text-[12px] font-bold leading-[16px] tracking-[0.5px]">
              <div className="flex items-center justify-center gap-[8px] rounded-[4px] bg-[#181a26]">
                Bundesland <FaSortAlphaDown className="h-[17px] w-[17px] text-[#77777d]" />
              </div>
              {[["Mindestens eine", "Impfdosis"], ["Verabreichte", "Impfdosen"], ["Impfdosen AstraZeneca"], ["Impfdosen", "BioNTech/Pfizer"], ["Impfdosen Johnson &", "Johnson"], ["Impfdosen Moderna"]].map((l, i) => (
                <div key={i} className="flex flex-col justify-center rounded-[4px] bg-[#181a26]">
                  {l.map((s) => (
                    <span key={s}>{s}</span>
                  ))}
                </div>
              ))}
            </div>
            <div className="mt-[5px] grid h-[42px] grid-cols-7 gap-[5px] rounded-[4px] bg-[#181a26]">
              <div className="flex items-center rounded-[4px] bg-[#1a202b] pb-px pl-[10px] text-[13.5px] font-medium text-[#98989d]">Deutschland</div>
              <Cells cells={TOTAL} />
            </div>
            <div className="mt-[5px] flex h-[300px] overflow-hidden">
              <div className="flex w-[1189px] flex-col gap-[5px]">
                {ROWS.map(([n, cells]) => (
                  <div key={n} className="grid h-[42px] shrink-0 grid-cols-7 gap-[5px]">
                    <div className="flex items-center rounded-[4px] bg-[#181a26] pb-px pl-[10px] text-[13.5px] font-medium text-[#98989d]">{n}</div>
                    <Cells cells={cells} />
                  </div>
                ))}
              </div>
              <div className="flex w-[14px] flex-col bg-[#3c4144]">
                <div className="flex h-[17px] items-center justify-center bg-[#686868]">
                  <div className="h-0 w-0 border-x-[3px] border-b-[4px] border-x-transparent border-b-[#3a3a3a]" />
                </div>
                <div className="mx-[2px] mt-[19px] h-[88px] bg-[#232323]" />
                <div className="mt-auto flex h-[17px] items-center justify-center bg-[#686868]">
                  <div className="h-0 w-0 border-x-[3px] border-t-[4px] border-x-transparent border-t-[#3a3a3a]" />
                </div>
              </div>
            </div>
          </section>

          <section>
            <Heading className="bg-[#251a33] tracking-[0.1px] text-[#c79be6]">Diagramme - Deutschland</Heading>
            <div className="mt-[8px] flex gap-[5px]">
              <Tab className="w-[252px] bg-[#251a33] text-[#b78ed6]">Prozentuale Impfverteilung</Tab>
              <Tab className="w-[229px] bg-[#201f2a] text-[#bcbcc0]">Zeitliche Impfverteilung</Tab>
              <Tab className="w-[199px] bg-[#201f2a] text-[#bcbcc0]">Erst- &amp; Zweitimpfung</Tab>
            </div>
            <div className="mt-[51px] flex">
              <svg viewBox="0 0 208 208" className="ml-[75px] h-[208px] w-[208px]">
                {SLICES.map((s) => (
                  <path key={s.color} d={slicePath(s.from, s.to)} fill={s.color} />
                ))}
              </svg>
              <div className="ml-[75px] pt-[22px]">
                <div className="text-[36px] font-medium leading-[44px] tracking-[-1px]">72.806.699</div>
                <div className="text-[24px] font-medium leading-[36px] tracking-[0.9px]">Total</div>
                <div className="mt-[16px] flex">
                  {LEGEND.map(([n, l, p, w, c]) => (
                    <div key={l} className={"flex " + w}>
                      <div className={"h-[42px] w-[4px] " + c} />
                      <div className="pl-[7px]">
                        <div className="text-[24px] font-medium leading-[20px] tracking-[-0.4px]">{n}</div>
                        <div className="text-[14px] font-medium leading-[14px] tracking-[0.05px] text-[#96969b]">{l}</div>
                        <div className="mt-[4px] text-[24px] font-medium leading-[30px] tracking-[-0.6px] text-[#96969b]">{p}</div>
                      </div>
                    </div>
                  ))}
                </div>
              </div>
            </div>
          </section>
        </div>

        <section className="w-[1203px]">
          <Heading className="bg-[#201f2a] tracking-[0.4px] text-[#bcbcc0]">Impffortschritt</Heading>
          <div className="mt-[8px] flex gap-[5px]">
            <Tab className="w-[128px] bg-[#162033] text-[#93b5e6]">Erstimpfung</Tab>
            <Tab className="w-[141px] bg-[#201f2a] text-[#bcbcc0]">Zweitimpfung</Tab>
          </div>
          <div className="mt-[5px] flex h-[1272px] overflow-hidden rounded-[8px] bg-[#201f2a]">
            <GermanyMap />
          </div>
        </section>
      </main>

      <footer className="flex h-[58px] shrink-0 items-center justify-between bg-[#201f2a] px-[40px]">
        <div className="flex h-[23px] w-[83px] items-center justify-center rounded-[2px] bg-[#292a33] text-[16px] font-bold leading-none tracking-[0.2px] text-[#c4c1bb]">Covidash</div>
        <div className="flex text-[10.5px] font-semibold leading-[14px] text-[#c4c1bb]">
          <div className="flex w-[66px] flex-col items-center gap-[5px]">
            <FaGitlab className="h-[20px] w-[20px]" />
            GitLab
          </div>
          <div className="flex w-[65px] flex-col items-center gap-[5px]">
            <FaUsers className="h-[20px] w-[26px]" />
            Team
          </div>
          <div className="flex w-[61px] flex-col items-center gap-[5px] pl-[5px] tracking-[-0.25px]">
            <FaStamp className="h-[20px] w-[20px]" />
            Impressum
          </div>
        </div>
      </footer>
    </div>
  );
}
